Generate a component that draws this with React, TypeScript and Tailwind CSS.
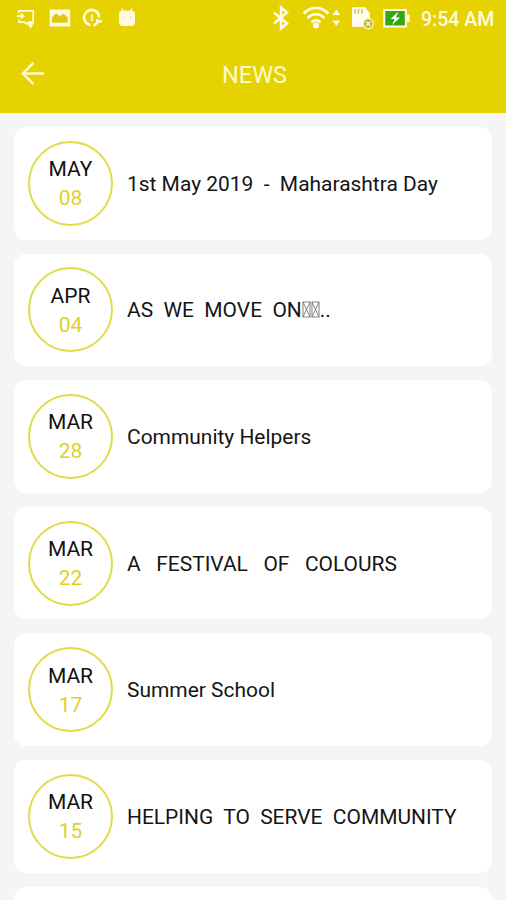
interface NewsItem {
  month: string;
  day: string;
  title: string;
  missing?: number;
  tail?: string;
}

const news: NewsItem[] = [
  { month: "MAY", day: "08", title: "1st May 2019  -  Maharashtra Day" },
  { month: "APR", day: "04", title: "AS  WE  MOVE  ON", missing: 2, tail: ".." },
  { month: "MAR", day: "28", title: "Community Helpers" },
  { month: "MAR", day: "22", title: "A   FESTIVAL   OF   COLOURS" },
  { month: "MAR", day: "17", title: "Summer School" },
  { month: "MAR", day: "15", title: "HELPING  TO  SERVE  COMMUNITY" },
];

function MissingGlyph() {
  return (
    <svg width="9" height="17" viewBox="0 0 9 17" className="inline-block align-[-1px]" fill="none" stroke="#777" strokeWidth="0.9">
      <rect x="1" y="1" width="7" height="15" />
      <path d="M1 1l7 15M8 1L1 16" />
    </svg>
  );
}

function NotificationIcons() {
  return (
    <svg width="122" height="24" viewBox="16 6 122 24" fill="none" stroke="#fffbe0" strokeWidth="1.8">
      {/* screen share */}
      <path d="M19 13v-2.2h14.2v11.4H31M19 19.5v2.7h5.5" />
      <path d="M17 16h5" strokeWidth="2.4" />
      <path d="M21 12.8l4 3.2-4 3.2z" fill="#fffbe0" stroke="none" />
      <path d="M23.5 21.5l4 3M28 22.2h5M28.5 23.5h4l-1.8 3.5z" />
      {/* picture */}
      <rect x="49.6" y="9.6" width="20.6" height="17" rx="1" fill="#fffbe0" stroke="none" />
      <path d="M52 22.8v-5.3l3-3.5q1.2-1.2 2.5 0l2 2.5 2.5-2q1.3-1 2.7 0l3 2.800v5.500z" fill="#ddca10" stroke="none" />
      {/* clock with wrench */}
      <path d="M90.5 25A7.6 7.6 0 1 1 99.2 17.5" strokeWidth="2.6" />
      <path d="M92 14.5v6.5" strokeWidth="2.6" opacity=".75" />
      <path d="M94 26l4-4.5M97 19c0 3 2 3.700 5 1.500" strokeWidth="2.6" />
      {/* android */}
      <path d="M123 10.5h8q4 0 4 4v7.5q0 4-4 4h-8q-4 0-4-4v-7.5q0-4 4-4z" fill="#fffbe0" stroke="none" />
      <path d="M121.800 8.500l1.500 3M132.200 8.500l-1.500 3" strokeWidth="1.4" />
      <circle cx="123.3" cy="17.5" r="0.8" fill="#e3d44e" stroke="none" />
      <circle cx="130.7" cy="17.5" r="0.8" fill="#e3d44e" stroke="none" />
    </svg>
  );
}

function SystemIcons() {
  return (
    <svg width="140" height="26" viewBox="271 5 140 26" fill="none" stroke="#fffdf0">
      {/* bluetooth */}
      <path d="M274 12.5l13 11-6 5v-21l6 5-13 11" strokeWidth="2.5" />
      {/* wifi */}
      <path d="M303.5 13.5c7.5-7.5 17.5-7.5 25 0M307.5 18c5-5 12-5 17 0M311.5 22.3c3-2.8 6-2.8 9 0" strokeWidth="2.5" />
      <circle cx="316" cy="25.5" r="3" fill="#fffdf0" stroke="none" />
      <path d="M336.3 9.5l3.8 5.5h-7.6zM336.3 26l3.8-5.5h-7.6z" fill="#fffdf0" stroke="none" />
      {/* sd card */}
      <path d="M352 8.5q0-1.5 1.5-1.5h11l5.5 6v14h-16.5q-1.5 0-1.5-1.5z" fill="#fffdf0" stroke="none" />
      <path d="M355 9v4.5M358.5 9v4.5M362 9v4.5" stroke="#cdbb2b" strokeWidth="1.3" />
      <circle cx="368.3" cy="23.7" r="5" fill="#c3b42e" stroke="#fff7bd" strokeWidth="1.3" />
      <path d="M366.2 21.6l4.2 4.2M370.4 21.6l-4.2 4.2" strokeWidth="1.3" />
      {/* battery */}
      <rect x="384.3" y="10" width="21.5" height="16.5" fill="#35a712" strokeWidth="2" />
      <path d="M407 14.5h2.5v7.5H407z" fill="#fffdf0" stroke="none" />
      <path d="M398.5 11.5l-8 7.5h4.3l-2.8 6 8-7.5h-4.2z" fill="#fff" stroke="none" />
    </svg>
  );
}

function Header() {
  return (
    <header className="h-[113px] shrink-0 bg-[#e5d200]">
      <div className="flex h-9 items-center justify-between pl-4 pr-[11px]">
        <NotificationIcons />
        <div className="flex items-center gap-[10px]">
          <SystemIcons />
          <span className="w-[74px] whitespace-nowrap pt-[3px] text-[19.5px] font-medium leading-6 text-[#fffbe0]">9:54 AM</span>
        </div>
      </div>
      <div className="grid h-[77px] grid-cols-3 items-center px-5">
        <button aria-label="Back" className="w-fit">
          <svg width="26" height="26" viewBox="0 0 26 26" fill="none" stroke="#fffaca" strokeWidth="2.4">
            <path d="M24 11.5H2.5M13.5 0.8L2.8 11.5l10.7 10.7" />
          </svg>
        </button>
        <h1 className="pl-[3px] pt-px text-center text-[23.5px] leading-7 text-[#fffaca]">NEWS</h1>
      </div>
    </header>
  );
}

function NewsCard({ item }: { item: NewsItem }) {
  return (
    <li className="flex h-[112.6px] shrink-0 items-center gap-[14px] rounded-[12px] bg-white pl-[14px]">
      <div className="flex h-[85px] w-[85px] shrink-0 flex-col items-center justify-center rounded-full border-2 border-[#dfdc48] pt-[2px] text-[21px] leading-[29px]">
        <span className="text-[#111]">{item.month}</span>
        <span className="text-[#dfd02a]">{item.day}</span>
      </div>
      <p className="whitespace-pre pt-px text-[20.95px] leading-7 text-[#151515]">
        {item.title}
        {Array.from({ length: item.missing ?? 0 }, (_, i) => (
          <MissingGlyph key={i} />
        ))}
        {item.tail}
      </p>
    </li>
  );
}

export default function App() {
  return (
    <div className="flex h-[900px] w-[506px] flex-col overflow-hidden bg-[#f5f5f5] font-[Roboto,sans-serif]">
      <Header />
      <ul className="flex min-h-0 flex-1 flex-col gap-[14px] overflow-hidden px-[14px] pt-[14px]">
        {news.map((item) => (
          <NewsCard key={item.month + item.day} item={item} />
        ))}
        <li className="h-[112.6px] shrink-0 rounded-[12px] bg-white" />
      </ul>
    </div>
  );
}
